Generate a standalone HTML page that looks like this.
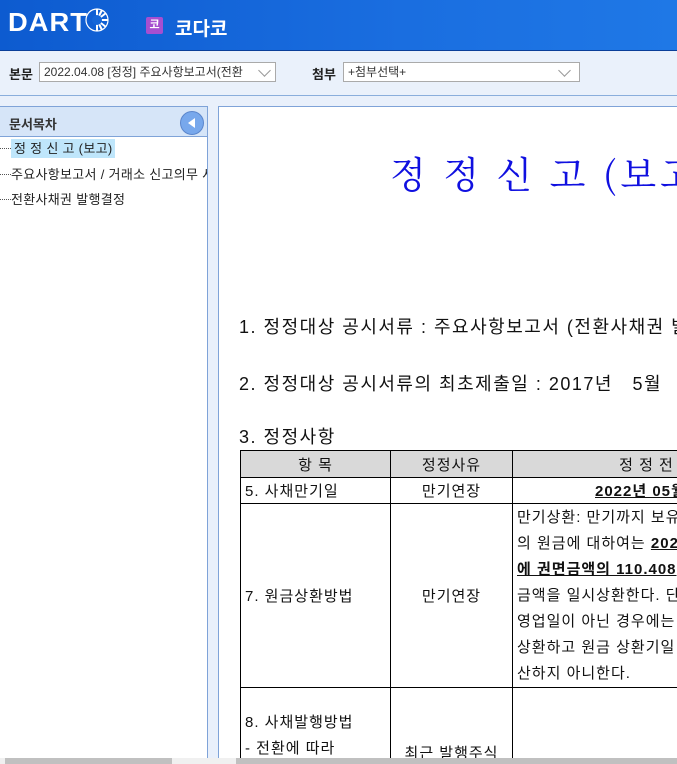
<!DOCTYPE html>
<html><head><meta charset="utf-8">
<style>
*{margin:0;padding:0;box-sizing:border-box}
body{width:677px;height:764px;overflow:hidden;position:relative;background:#e9f0fb;font-family:"Liberation Sans","Noto Sans CJK KR",sans-serif}
.hdr{position:absolute;left:0;top:0;width:677px;height:51px;background:linear-gradient(90deg,#0d5bd0,#1a6ee0 60%,#1f78e6);border-bottom:1px solid #0a3f99}
.logo{position:absolute;left:8px;top:7px;color:#fff;font-weight:bold;font-size:26px;letter-spacing:1px;font-family:"Liberation Sans",sans-serif;transform:scaleX(1.05);transform-origin:left}
.kico{position:absolute;left:146px;top:17px;width:17px;height:17px;background:#a64fd0;border-radius:2px;color:#fff;font-size:11px;text-align:center;line-height:17px;font-weight:bold}
.kname{position:absolute;left:175px;top:14px;color:#fff;font-size:19px;font-weight:bold}
.tb{position:absolute;left:0;top:52px;width:677px;height:44px;background:#eaf1fb;border-bottom:1px solid #8aaedc}
.lbl{position:absolute;top:64px;font-size:13px;color:#222;font-weight:bold}
.sel{position:absolute;top:62px;height:20px;background:#fff;border:1px solid #aaa;font-size:12px;line-height:18px;padding-left:4px;color:#333;white-space:nowrap;overflow:hidden}
.chev{position:absolute;right:6px;top:3px;width:9px;height:9px;border-right:1px solid #999;border-bottom:1px solid #999;transform:rotate(45deg)}
.lp{position:absolute;left:0;top:106px;width:208px;height:658px;background:#fff;border-right:1px solid #7fa3d8;border-top:1px solid #7fa3d8;overflow:hidden}
.lph{height:30px;background:#d6e5f8;border-bottom:1px solid #7fa3d8;font-size:13px;font-weight:bold;color:#333;padding:7px 0 0 9px}
.btn{position:absolute;left:180px;top:4px;width:24px;height:24px;border-radius:50%;background:#78a8ec;border:1px solid #5b86cc}
.btn:after{content:"";position:absolute;left:7px;top:6px;border-right:7px solid #fff;border-top:5px solid transparent;border-bottom:5px solid transparent}
.it{position:absolute;left:0;font-size:13px;color:#222;white-space:nowrap;letter-spacing:0.3px}
.it span.d{display:inline-block;width:11px;border-bottom:1px dotted #555;vertical-align:4px}
.cp{position:absolute;left:218px;top:106px;width:459px;height:652px;background:#fff;border-left:1px solid #7fa3d8;border-top:1px solid #7fa3d8;overflow:hidden}
.title{position:absolute;left:171px;top:38px;font-family:"Noto Serif CJK SC","Liberation Serif",serif;font-size:37px;color:#1010e0;white-space:nowrap;letter-spacing:4px}
.ln{position:absolute;left:20px;font-size:18px;color:#111;white-space:nowrap;letter-spacing:1.5px}
table{position:absolute;left:21px;top:343px;width:540px;border-collapse:collapse;font-size:15px;letter-spacing:1px;color:#111;table-layout:fixed}
td{border:1px solid #000;padding:0 4px;vertical-align:middle;overflow:hidden;white-space:nowrap}
.th td{background:#d9d9d9;text-align:center;height:27px}
.c{text-align:center}
u{text-decoration:underline;color:#111}
.sb{position:absolute;left:0;top:758px;width:677px;height:6px;background:#f0f0f0}
</style></head><body>
<div class="hdr">
<div class="logo">DART</div>
<svg style="position:absolute;left:83px;top:6px" width="28" height="28" viewBox="0 0 28 28"><circle cx="14" cy="14" r="11" fill="none" stroke="#fff" stroke-width="1.2"/><g stroke="#fff" stroke-width="2"><line x1="14" y1="14" x2="25" y2="14"/><line x1="14" y1="14" x2="23" y2="7"/><line x1="14" y1="14" x2="23" y2="21"/><line x1="14" y1="14" x2="19" y2="4"/><line x1="14" y1="14" x2="19" y2="24"/><line x1="14" y1="14" x2="14" y2="3"/><line x1="14" y1="14" x2="14" y2="25"/></g><circle cx="14" cy="14" r="5" fill="#1566d8"/></svg>
<div class="kico">코</div>
<div class="kname">코다코</div>
</div>
<div class="tb"></div>
<div class="lbl" style="left:9px">본문</div>
<div class="sel" style="left:39px;width:237px">2022.04.08 [정정] 주요사항보고서(전환<div class="chev"></div></div>
<div class="lbl" style="left:312px">첨부</div>
<div class="sel" style="left:343px;width:237px">+첨부선택+<div class="chev" style="right:10px"></div></div>
<div class="lp">
<div class="lph">문서목차<div class="btn"></div></div>
<div class="it" style="top:31px"><span class="d"></span><span style="background:#bfe6fb;padding:2px 3px">정 정 신 고 (보고)</span></div>
<div class="it" style="top:57px"><span class="d"></span>주요사항보고서 / 거래소 신고의무 사</div>
<div class="it" style="top:82px"><span class="d"></span>전환사채권 발행결정</div>
</div>
<div class="cp">
<div class="title">정 정 신 고 (보고)</div>
<div class="ln" style="top:206px">1. 정정대상 공시서류 : 주요사항보고서 (전환사채권 발행결정)</div>
<div class="ln" style="top:263px">2. 정정대상 공시서류의 최초제출일 : 2017년 &nbsp; 5월</div>
<div class="ln" style="top:316px">3. 정정사항</div>
<table>
<colgroup><col style="width:150px"><col style="width:122px"><col style="width:268px"></colgroup>
<tr class="th"><td>항 목</td><td>정정사유</td><td>정 정 전</td></tr>
<tr style="height:26px"><td>5. 사채만기일</td><td class="c">만기연장</td><td style="padding-left:82px"><u><b>2022년 05월</b></u></td></tr>
<tr style="height:184px"><td>7. 원금상환방법</td><td class="c">만기연장</td><td style="line-height:26px">만기상환: 만기까지 보유<br>의 원금에 대하여는 <u><b>2022</b></u><br><u><b>에 권면금액의 110.408</b></u><br>금액을 일시상환한다. 단<br>영업일이 아닌 경우에는<br>상환하고 원금 상환기일<br>산하지 아니한다.</td></tr>
<tr style="height:90px"><td style="vertical-align:top;padding-top:22px;line-height:26px">8. 사채발행방법<br>- 전환에 따라</td><td class="c" style="vertical-align:top;padding-top:54px">최근 발행주식</td><td></td></tr>
</table>
</div>
<div class="sb"><div style="position:absolute;left:5px;top:0;width:167px;height:6px;background:#c0c0c0"></div><div style="position:absolute;left:236px;top:0;width:441px;height:6px;background:#c0c0c0"></div></div>
</body></html>
